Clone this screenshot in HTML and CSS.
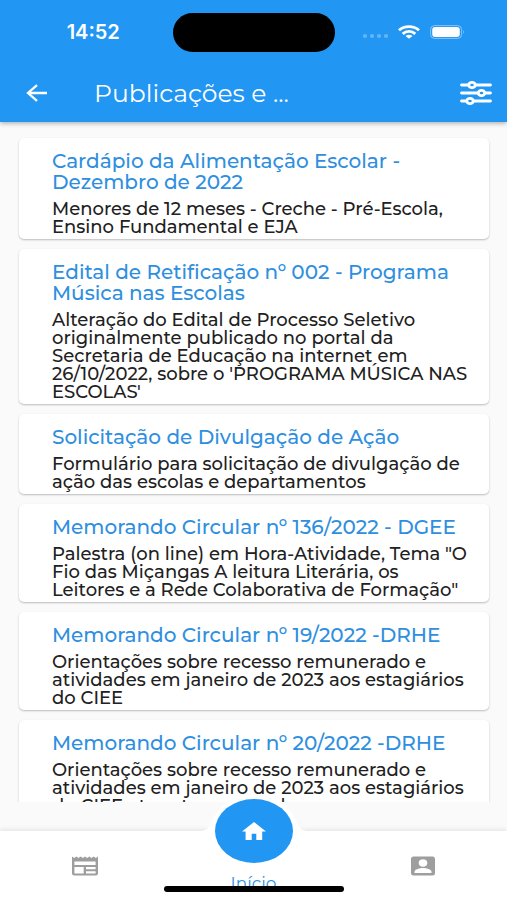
FILE: index.html
```html
<!DOCTYPE html>
<html lang="pt-BR">
<head>
<meta charset="utf-8">
<meta name="viewport" content="width=device-width, initial-scale=1">
<title>Publicações</title>
<link rel="stylesheet" href="styles.css">
</head>
<body>
<header class="top">
  <div class="status">
    <span class="time">14:52</span>
    <span class="island"></span>
    <span class="signals">
      <svg width="26" height="6" viewBox="0 0 26 6" fill="#fff" fill-opacity=".3"><circle cx="3" cy="3" r="2.1"/><circle cx="10" cy="3" r="2.1"/><circle cx="17" cy="3" r="2.1"/><circle cx="24" cy="3" r="2.1"/></svg>
      <svg width="22" height="14" viewBox="0 0 22 14" fill="none" stroke="#fff" stroke-width="2.800"><path d="M1 5.200C6.500 .3 15.500 .3 21 5.200"/><path d="M4.700 8.900C8.300 5.600 13.700 5.600 17.300 8.900"/><path d="M11 13.800 7.500 11C9.500 9.200 12.500 9.200 14.500 11Z" fill="#fff" stroke="none"/></svg>
      <svg width="36" height="14" viewBox="0 0 36 14"><rect x=".6" y=".6" width="31" height="12.800" rx="4" fill="none" stroke="#fff" stroke-opacity=".45"/><rect x="2.200" y="2" width="27.600" height="10" rx="3" fill="#fff"/><path d="M33.300 4.800q1.700 2.200 0 4.400z" fill="#fff" fill-opacity=".5"/></svg>
    </span>
  </div>
  <div class="bar">
    <button class="icon-btn" type="button" aria-label="Voltar">
      <svg width="22" height="18" viewBox="0 0 22 18" fill="none" stroke="#fff" stroke-width="2.300"><path d="M21 9H2M11 1.200 2 9l9 7.800"/></svg>
    </button>
    <h1>Publicações e ...</h1>
    <button class="icon-btn" type="button" aria-label="Filtros">
      <svg width="32" height="26" viewBox="0 0 32 26" fill="#2196f3" stroke="#fff" stroke-width="2.800" stroke-linecap="round"><path d="M1.500 5h29M1.500 13h29M1.500 21h29"/><ellipse cx="12" cy="5" rx="3.200" ry="2.700"/><ellipse cx="21.500" cy="13" rx="3.200" ry="2.700"/><ellipse cx="10" cy="21" rx="3.200" ry="2.700"/></svg>
    </button>
  </div>
</header>
<main class="list">
  <article class="card">
    <h2>Cardápio da Alimentação Escolar -<br>Dezembro de 2022</h2>
    <p>Menores de 12 meses - Creche - Pré-Escola,<br>Ensino Fundamental e EJA</p>
  </article>
  <article class="card">
    <h2>Edital de Retificação nº 002 - Programa<br>Música nas Escolas</h2>
    <p>Alteração do Edital de Processo Seletivo<br>originalmente publicado no portal da<br>Secretaria de Educação na internet em<br>26/10/2022, sobre o 'PROGRAMA MÚSICA NAS<br>ESCOLAS'</p>
  </article>
  <article class="card">
    <h2>Solicitação de Divulgação de Ação</h2>
    <p>Formulário para solicitação de divulgação de<br>ação das escolas e departamentos</p>
  </article>
  <article class="card">
    <h2>Memorando Circular nº 136/2022 - DGEE</h2>
    <p>Palestra (on line) em Hora-Atividade, Tema "O<br>Fio das Miçangas A leitura Literária, os<br>Leitores e a Rede Colaborativa de Formação"</p>
  </article>
  <article class="card">
    <h2>Memorando Circular nº 19/2022 -DRHE</h2>
    <p>Orientações sobre recesso remunerado e<br>atividades em janeiro de 2023 aos estagiários<br>do CIEE</p>
  </article>
  <article class="card">
    <h2>Memorando Circular nº 20/2022 -DRHE</h2>
    <p>Orientações sobre recesso remunerado e<br>atividades em janeiro de 2023 aos estagiários<br>do CIEE atuantes na saúde</p>
  </article>
</main>
<nav class="tabs">
  <a class="tab" href="#noticias" aria-label="Notícias">
    <svg width="26" height="20" viewBox="0 0 26 20" fill="#9e9e9e"><path fill-rule="evenodd" d="M0 .5 2.200 2 4.300 .5 6.500 2 8.700 .5 10.800 2 13 .5 15.200 2 17.300 .5 19.500 2 21.700 .5 23.800 2 26 .5V17.500q0 2-2.300 2H2.300Q0 19.500 0 17.500ZM2.400 5.500V9H23.600V5.500ZM2.400 11V17.500H11.700V11ZM14 11V13.200H23.600V11ZM14 15.200V17.500H23.600V15.200Z"/></svg>
  </a>
  <a class="tab home" href="#inicio">
    <svg class="bump" width="108" height="44" viewBox="0 0 108 44"><path d="M0 36C7 36 9 32 12 26 19 10 34 1 54 1S89 10 96 26C99 32 101 36 108 36V44H0Z" fill="#fff"/></svg>
    <span class="disc">
      <svg width="24" height="18" viewBox="0 0 24 18" fill="#fff"><path d="M9.700 18V11.700h4.600V18h5.900V9.500H24L12 0 0 9.500h3.600V18Z"/></svg>
    </span>
    <span class="label">Início</span>
  </a>
  <a class="tab" href="#perfil" aria-label="Perfil">
    <svg width="24" height="20" viewBox="0 0 24 20"><rect y=".5" width="24" height="19" rx="2.500" fill="#9e9e9e"/><ellipse cx="12" cy="7" rx="4.300" ry="3.700" fill="#fff"/><path d="M3.500 17V15.800C3.500 13 9 11.900 12 11.900S20.500 13 20.500 15.800V17Z" fill="#fff"/></svg>
  </a>
  <span class="indicator"></span>
</nav>
</body>
</html>
```
FILE: styles.css
```css
* {
  box-sizing: border-box;
}

body {
  margin: 0;
  height: 100vh;
  display: flex;
  flex-direction: column;
  overflow: hidden;
  background: #fafafa;
  color: #212121;
  font-family: Montserrat, Inter, sans-serif;
}

h1,
h2,
p {
  margin: 0;
}

svg {
  display: block;
}

.top {
  position: relative;
  z-index: 1;
  background: #2196f3;
  color: #fff;
  box-shadow: 0 1px 5px rgba(0, 0, 0, .35);
}

.status {
  display: grid;
  grid-template-columns: 1fr 162px 1fr;
  align-items: center;
  height: 64px;
}

.time {
  padding-left: 14px;
  font-family: Inter, sans-serif;
  font-size: 20px;
  font-weight: 600;
  text-align: center;
}

.island {
  height: 39px;
  border-radius: 20px;
  background: #000;
}

.signals {
  display: flex;
  align-items: center;
  justify-content: flex-end;
  gap: 10px;
  padding-right: 41px;
}

.signals svg:first-child {
  margin-top: 8px;
}

.bar {
  display: flex;
  align-items: center;
  height: 58px;
  padding: 0 15px 0 26px;
}

.bar h1 {
  flex: 1;
  padding-left: 46px;
  font-size: 25px;
  font-weight: 400;
  line-height: 24px;
}

.icon-btn {
  padding: 0;
  border: 0;
  background: none;
}

.list {
  flex: 1;
  min-height: 0;
  display: flex;
  flex-direction: column;
  gap: 10px;
  padding: 16px 18px 0 19px;
  overflow: hidden;
}

.card {
  flex: none;
  padding: 13px 0 3px 33px;
  border-radius: 5px;
  background: #fff;
  box-shadow: 0 1px 2px rgba(0, 0, 0, .25);
  white-space: nowrap;
}

.card h2 {
  margin-bottom: 7px;
  color: #2f8fdf;
  font-size: 20px;
  font-weight: 500;
  line-height: 21px;
}

.card p {
  font-size: 18px;
  font-weight: 500;
  line-height: 18px;
}

.tabs {
  position: relative;
  flex: none;
  display: grid;
  grid-template-columns: repeat(3, 1fr);
  height: 69px;
  margin-top: 29px;
  background: #fff;
  box-shadow: 0 -1px 5px rgba(0, 0, 0, .1);
}

.tab {
  display: flex;
  justify-content: center;
  padding-top: 25px;
  color: #2f8fdf;
  text-decoration: none;
}

.home {
  position: relative;
  flex-direction: column;
  align-items: center;
  justify-content: flex-end;
  padding: 0 0 8px;
}

.bump {
  position: absolute;
  top: -36px;
  left: calc(50% - 54px);
}

.disc {
  position: absolute;
  top: -32px;
  left: calc(50% - 39px);
  display: flex;
  align-items: center;
  justify-content: center;
  width: 78px;
  height: 64px;
  border-radius: 50%;
  background: #2196f3;
}

.label {
  font-size: 17px;
  line-height: 18px;
}

.indicator {
  position: absolute;
  bottom: 8px;
  left: calc(50% - 90px);
  width: 180px;
  height: 6px;
  border-radius: 3px;
  background: #000;
}
```
